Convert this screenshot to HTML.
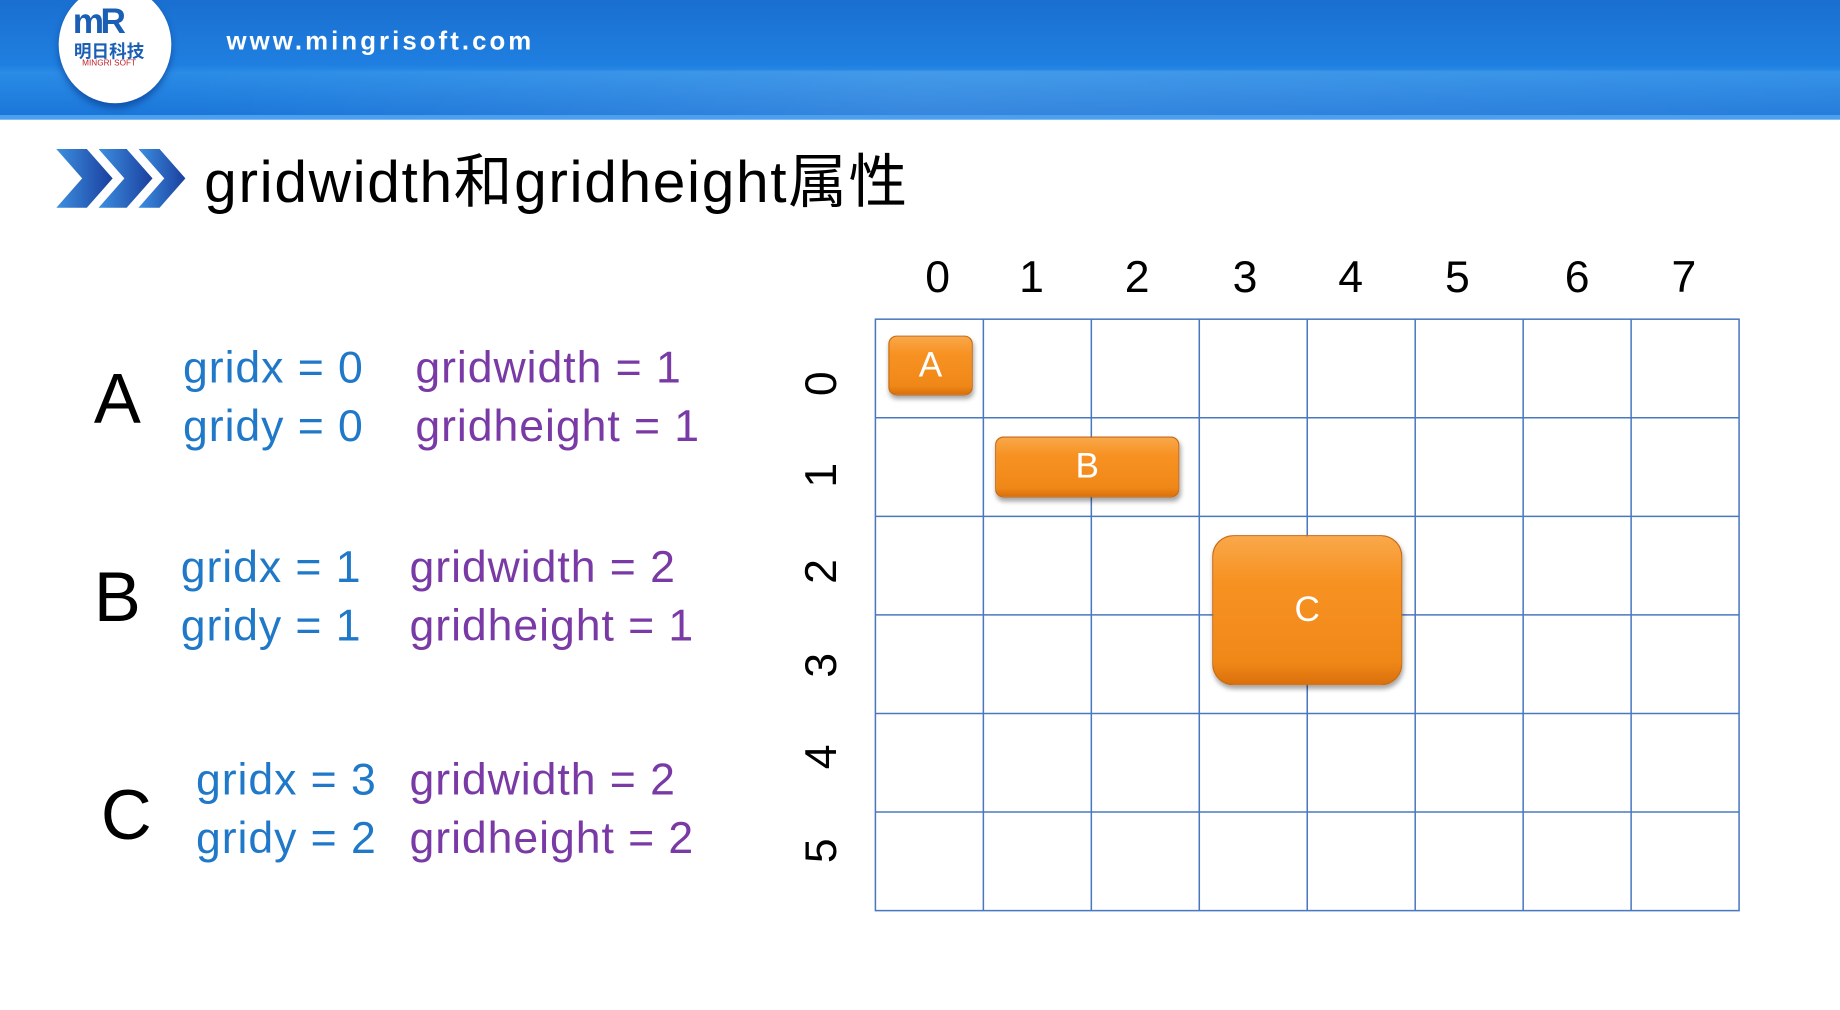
<!DOCTYPE html>
<html><head><meta charset="utf-8"><style>
html,body{margin:0;padding:0;width:1840px;height:1010px;overflow:hidden;background:#fff}
#s{position:absolute;left:0;top:0;width:1568px;height:861px;transform:scale(1.17347);transform-origin:0 0;font-family:"Liberation Sans","Noto Sans CJK SC",sans-serif}
.a{position:absolute;white-space:nowrap}
.hd{position:absolute;left:0;top:0;width:1568px;height:100px;background:linear-gradient(180deg,#1a6fd0 0%,#1f7fe0 55%,#2a8ce6 62%,#1a75d8 100%)}
.hd2{position:absolute;left:0;top:60px;width:1568px;height:38px;background:linear-gradient(90deg,rgba(255,255,255,0) 10%,rgba(255,255,255,.12) 50%,rgba(255,255,255,.05) 100%)}
.bl{color:#1f78c8;font-size:38px;letter-spacing:0.8px}
.pu{color:#7a3aa6;font-size:38px;letter-spacing:0.8px}
.big{font-size:60px;color:#000}
.col{font-size:38px;color:#000;transform:translateX(-50%)}
.row{font-size:38px;color:#000;transform:translate(-50%,-50%) rotate(-90deg)}
.bx{position:absolute;background:linear-gradient(180deg,#f9a84a 0%,#f79222 30%,#f08818 85%,#d9700c 100%);border:1px solid #c96a10;box-shadow:1px 3px 4px rgba(0,0,0,.35);color:#fff;display:flex;align-items:center;justify-content:center;font-size:30px}
</style></head><body><div id="s">
<div class="hd"></div><div class="hd2"></div>
<div class="a" style="left:0;top:98px;width:1568px;height:4px;background:#4aa0ee"></div>
<div class="a" style="left:50px;top:-12px;width:96px;height:100px;border-radius:50%;background:#fff;box-shadow:0 4px 6px rgba(0,40,120,.5)"></div>
<div class="a" style="left:62px;top:2px;font-size:30px;font-weight:bold;color:#1a5fb4;letter-spacing:-3px">mR</div>
<div class="a" style="left:63px;top:33px;font-size:15px;font-weight:bold;color:#1a5fb4">明日科技</div>
<div class="a" style="left:70px;top:51px;font-size:7px;color:#c0202a">MINGRI SOFT</div>
<div class="a" style="left:193px;top:22px;font-size:22px;font-weight:bold;color:#fff;letter-spacing:2.6px">www.mingrisoft.com</div>
<svg class="a" style="left:46px;top:124px" width="114" height="56" viewBox="0 0 114 56">
<defs><linearGradient id="g" x1="0" x2="1"><stop offset="0" stop-color="#3d8fe0"/><stop offset="1" stop-color="#1a3f9e"/></linearGradient></defs>
<polygon points="2,3 28,3 50,28 28,53 2,53 24,28" fill="url(#g)"/>
<polygon points="38,3 62,3 84,28 62,53 38,53 60,28" fill="url(#g)"/>
<polygon points="72,3 90,3 112,28 90,53 72,53 94,28" fill="url(#g)"/>
</svg>
<div class="a" style="left:174px;top:115px;font-size:50px;color:#000;letter-spacing:1.4px">gridwidth和gridheight属性</div>
<div class="a big" style="left:80px;top:305px">A</div>
<div class="a bl" style="left:156px;top:293px">gridx = 0</div>
<div class="a bl" style="left:156px;top:343px">gridy = 0</div>
<div class="a pu" style="left:354px;top:293px">gridwidth = 1</div>
<div class="a pu" style="left:354px;top:343px">gridheight = 1</div>
<div class="a big" style="left:80px;top:474px">B</div>
<div class="a bl" style="left:154px;top:463px">gridx = 1</div>
<div class="a bl" style="left:154px;top:513px">gridy = 1</div>
<div class="a pu" style="left:349px;top:463px">gridwidth = 2</div>
<div class="a pu" style="left:349px;top:513px">gridheight = 1</div>
<div class="a big" style="left:86px;top:660px">C</div>
<div class="a bl" style="left:167px;top:644px">gridx = 3</div>
<div class="a bl" style="left:167px;top:694px">gridy = 2</div>
<div class="a pu" style="left:349px;top:644px">gridwidth = 2</div>
<div class="a pu" style="left:349px;top:694px">gridheight = 2</div>
<div class="a col" style="left:799px;top:216px">0</div>
<div class="a col" style="left:879px;top:216px">1</div>
<div class="a col" style="left:969px;top:216px">2</div>
<div class="a col" style="left:1061px;top:216px">3</div>
<div class="a col" style="left:1151px;top:216px">4</div>
<div class="a col" style="left:1242px;top:216px">5</div>
<div class="a col" style="left:1344px;top:216px">6</div>
<div class="a col" style="left:1435px;top:216px">7</div>
<div class="a row" style="left:701px;top:327px">0</div>
<div class="a row" style="left:701px;top:405px">1</div>
<div class="a row" style="left:701px;top:487px">2</div>
<div class="a row" style="left:701px;top:567px">3</div>
<div class="a row" style="left:701px;top:645px">4</div>
<div class="a row" style="left:701px;top:725px">5</div>
<svg class="a" style="left:745px;top:271px" width="740" height="507">
<g stroke="#4a78c0" stroke-width="1.3" fill="none">
<rect x="1" y="1" width="736" height="504"/>
<line x1="93" y1="1" x2="93" y2="505"/><line x1="185" y1="1" x2="185" y2="505"/><line x1="277" y1="1" x2="277" y2="505"/><line x1="369" y1="1" x2="369" y2="505"/><line x1="461" y1="1" x2="461" y2="505"/><line x1="553" y1="1" x2="553" y2="505"/><line x1="645" y1="1" x2="645" y2="505"/>
<line x1="1" y1="85" x2="737" y2="85"/><line x1="1" y1="169" x2="737" y2="169"/><line x1="1" y1="253" x2="737" y2="253"/><line x1="1" y1="337" x2="737" y2="337"/><line x1="1" y1="421" x2="737" y2="421"/>
</g></svg>
<div class="bx" style="left:757px;top:286px;width:70px;height:49px;border-radius:7px">A</div>
<div class="bx" style="left:848px;top:372px;width:155px;height:50px;border-radius:7px">B</div>
<div class="bx" style="left:1033px;top:456px;width:160px;height:126px;border-radius:18px">C</div>
</div></body></html>
